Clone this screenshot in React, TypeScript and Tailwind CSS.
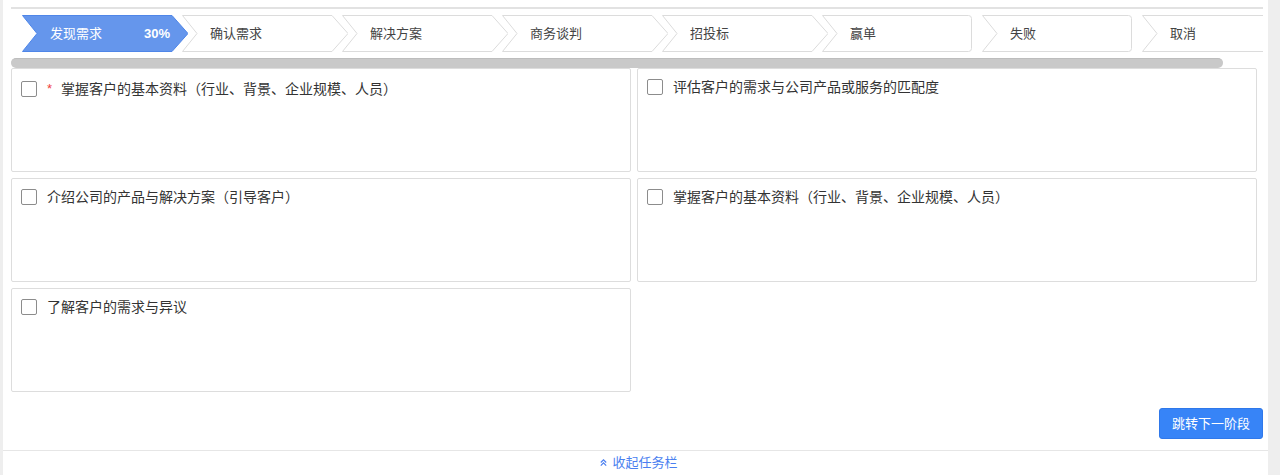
import React from 'react';

type Step = { label: string; kind: 'arrow' | 'box'; active?: boolean; percent?: string };

const steps: Step[] = [
  { label: '发现需求', kind: 'arrow', active: true, percent: '30%' },
  { label: '确认需求', kind: 'arrow' },
  { label: '解决方案', kind: 'arrow' },
  { label: '商务谈判', kind: 'arrow' },
  { label: '招投标', kind: 'arrow' },
  { label: '赢单', kind: 'box' },
  { label: '失败', kind: 'box' },
  { label: '取消', kind: 'box' },
];

const tasks = [
  { text: '掌握客户的基本资料（行业、背景、企业规模、人员）', required: true },
  { text: '评估客户的需求与公司产品或服务的匹配度' },
  { text: '介绍公司的产品与解决方案（引导客户）' },
  { text: '掌握客户的基本资料（行业、背景、企业规模、人员）' },
  { text: '了解客户的需求与异议' },
];

const StepShape: React.FC<{ step: Step }> = ({ step }) => {
  const fill = step.active ? '#6596ec' : '#ffffff';
  const stroke = step.active ? '#4f86e8' : '#dcdcdc';
  return (
    <svg className="absolute inset-0" width="166" height="37" viewBox="0 0 166 37">
      {step.kind === 'arrow' ? (
        <polygon
          points="0.5,0.5 150,0.5 166,18.5 150,36.5 0.5,36.5 15,18.5"
          fill={fill}
          stroke={stroke}
          strokeWidth="1"
        />
      ) : (
        <path
          d="M0.5 0.5 H146.5 Q149.5 0.5 149.5 3.5 V33.5 Q149.5 36.5 146.5 36.5 H0.5 L15 18.5 Z"
          fill={fill}
          stroke={stroke}
          strokeWidth="1"
        />
      )}
    </svg>
  );
};

const App: React.FC = () => {
  return (
    <div className="flex h-[475px] w-[1280px] bg-[#eeeeee] font-['Liberation_Sans','Noto_Sans_CJK_SC',sans-serif] overflow-hidden">
      <div className="ml-[3px] w-[1265px] h-full bg-white flex flex-col">
        <div className="pl-[8px] pr-[5px] pt-[7px]">
          <div className="h-[2px] w-[1252px] bg-[#e2e2e2]" />

          {/* stages */}
          <div className="mt-[6px] w-[1252px] overflow-hidden">
            <div className="flex pl-[11px]">
              {steps.map((s, i) => (
                <div
                  key={s.label}
                  className={`relative shrink-0 w-[166px] h-[37px] flex items-center ${i > 0 ? '-ml-[6px]' : ''}`}
                >
                  <StepShape step={s} />
                  <span className={`relative pl-[28px] text-[13px] ${s.active ? 'text-white' : 'text-[#444]'}`}>
                    {s.label}
                  </span>
                  {s.percent && (
                    <span className="relative ml-auto mr-[18px] text-[13px] font-bold text-white">{s.percent}</span>
                  )}
                </div>
              ))}
            </div>
          </div>

          {/* scrollbar thumb */}
          <div className="mt-[6px] h-[10px] w-[1212px] rounded-full bg-[#c9c9c9] border-t border-[#bdbdbd]" />

          {/* task cards */}
          <div className="grid grid-cols-[620px_620px] gap-[6px]">
            {tasks.map((t, i) => (
              <div key={i} className="h-[104px] border border-[#dddddd] rounded-[2px] px-[9px] pt-[10px]">
                <div className="flex items-center">
                  <span className="w-[16px] h-[16px] shrink-0 border border-[#8c8c8c] rounded-[2px] bg-white" />
                  {t.required && <span className="ml-[10px] text-[13px] text-[#f04040]">*</span>}
                  <span className={`${t.required ? 'ml-[9px]' : 'ml-[10px]'} text-[14px] text-[#333] leading-[16px]`}>
                    {t.text}
                  </span>
                </div>
              </div>
            ))}
          </div>

          <div className="mt-[16px] flex justify-end">
            <button className="h-[31px] w-[104px] rounded-[3px] bg-[#3784f7] border border-[#2f78ea] text-white text-[13px]">
              跳转下一阶段
            </button>
          </div>
        </div>

        <div className="mt-[11px] border-t border-[#e6e6e6] flex justify-center items-center h-[24px] pl-[6px] text-[13px] text-[#4a7ff0]">
          <svg width="9" height="9" viewBox="0 0 10 10" className="mr-[4px]" fill="none" stroke="#4a7ff0" strokeWidth="1.3">
            <polyline points="2,5 5,2 8,5" />
            <polyline points="2,8.5 5,5.5 8,8.5" />
          </svg>
          <span>收起任务栏</span>
        </div>
      </div>
    </div>
  );
};

export default App;
